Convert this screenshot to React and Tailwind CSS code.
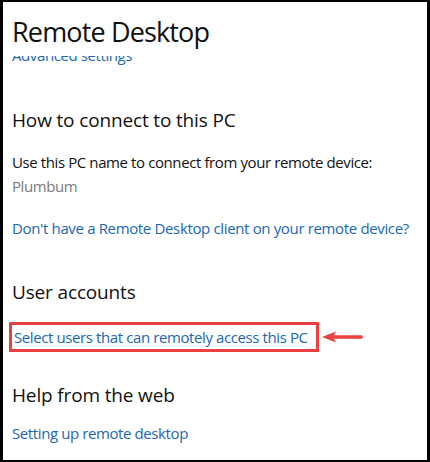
import React from 'react';

const font = { fontFamily: '"Open Sans", "Noto Sans", sans-serif' };

const Heading = ({ children, className = '' }) => (
  <h2 className={`text-[19px] leading-[28px] text-[#111] tracking-[-0.15px] whitespace-nowrap ${className}`}>{children}</h2>
);

const LinkText = ({ children, className = '' }) => (
  <a className={`block text-[15px] leading-[20px] text-[#1b68ae] tracking-[-0.4px] whitespace-nowrap ${className}`}>{children}</a>
);

export default function App() {
  return (
    <div className="w-[430px] h-[462px] bg-white" style={font}>
      <div className="w-full h-full border-t-2 border-b-2 border-l-[3px] border-r-[3px] border-black flex flex-col overflow-hidden">
        {/* page title */}
        <div className="px-[9px] pt-[12px]">
          <h1 className="text-[27px] leading-[36px] text-[#111] tracking-[-0.85px]">Remote Desktop</h1>
        </div>

        {/* scrolled content, previous link partly hidden under the title */}
        <div className="flex-1 px-[9px]">
          <div className="mt-[6px] h-[9px] overflow-hidden flex items-end">
            <LinkText>Advanced settings</LinkText>
          </div>

          <section className="mt-[41px]">
            <Heading>How to connect to this PC</Heading>
            <p className="mt-[18px] text-[15px] leading-[20px] text-[#111] tracking-[-0.4px] whitespace-nowrap">
              Use this PC name to connect from your remote device:
            </p>
            <p className="mt-[4px] text-[15px] leading-[20px] text-[#7a7a7a] tracking-[-0.4px]">Plumbum</p>
            <LinkText className="mt-[22px] tracking-[-0.35px]">Don't have a Remote Desktop client on your remote device?</LinkText>
          </section>

          <section className="mt-[40px]">
            <Heading>User accounts</Heading>
            <div className="mt-[16px] flex items-center">
              <div className="w-[310px] -ml-[3px] border-[3px] border-[#e8413f] pl-[2px] py-[2px]">
                <LinkText>Select users that can remotely access this PC</LinkText>
              </div>
              <svg width="42" height="12" viewBox="0 0 42 12" className="ml-[3px]">
                <path d="M0 6 L14 0.5 L11 6 L14 11.5 Z" fill="#e8413f" />
                <rect x="10" y="4.2" width="31" height="3.6" rx="1.8" fill="#e8413f" />
              </svg>
            </div>
          </section>

          <section className="mt-[29px]">
            <Heading>Help from the web</Heading>
            <LinkText className="mt-[14px]">Setting up remote desktop</LinkText>
          </section>
        </div>
      </div>
    </div>
  );
}
